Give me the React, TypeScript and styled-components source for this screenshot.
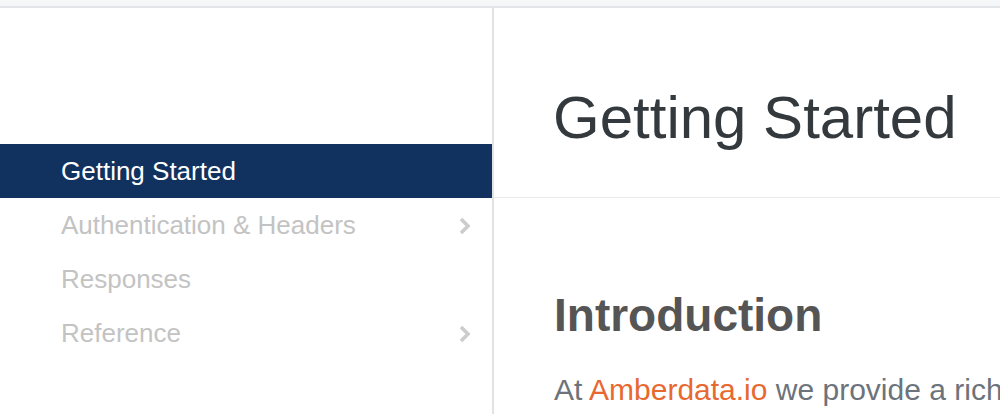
import styled, { createGlobalStyle } from "styled-components";

const GlobalStyle = createGlobalStyle`
  body {
    margin: 0;
    background: #ffffff;
    font-family: "Liberation Sans", Arial, sans-serif;
    overflow: hidden;
  }
`;

const navItems = [
  { label: "Getting Started", active: true, sub: false },
  { label: "Authentication & Headers", active: false, sub: true },
  { label: "Responses", active: false, sub: false },
  { label: "Reference", active: false, sub: true },
];

function Chevron() {
  return (
    <ChevronIcon viewBox="0 0 14 20" width="14" height="20">
      <polyline
        points="3,3 10,10 3,17"
        fill="none"
        stroke="#cccccc"
        strokeWidth="3.6"
      />
    </ChevronIcon>
  );
}

function App() {
  return (
    <Page>
      <GlobalStyle />
      <TopBar />
      <Layout>
        <Sidebar>
          {navItems.map((item) => (
            <NavItem key={item.label} $active={item.active}>
              <span>{item.label}</span>
              {item.sub && <Chevron />}
            </NavItem>
          ))}
        </Sidebar>
        <Main>
          <Header>
            <Title>Getting Started</Title>
          </Header>
          <Content>
            <SectionTitle>Introduction</SectionTitle>
            <Paragraph>
              At <Link>Amberdata.io</Link> we provide a rich set of
              blockchain data and APIs
            </Paragraph>
          </Content>
        </Main>
      </Layout>
    </Page>
  );
}

const Page = styled.div`
  width: 1000px;
  height: 414px;
  overflow: hidden;
`;

const TopBar = styled.div`
  height: 6px;
  background-color: #f5f6f8;
  border-bottom: 2px solid #e1e4e8;
`;

const Layout = styled.div`
  display: flex;
  height: 406px;
`;

const Sidebar = styled.nav`
  width: 492px;
  flex-shrink: 0;
  border-right: 2px solid #e2e2e2;
  padding-top: 136px;
  box-sizing: content-box;
`;

const NavItem = styled.div<{ $active: boolean }>`
  display: flex;
  align-items: center;
  justify-content: space-between;
  height: 54px;
  padding: 0 20px 0 61px;
  font-size: 26px;
  line-height: 54px;
  color: ${(p) => (p.$active ? "#ffffff" : "#c3c3c3")};
  background-color: ${(p) => (p.$active ? "#11325f" : "transparent")};
`;

const ChevronIcon = styled.svg`
  display: block;
  margin-top: 2px;
`;

const Main = styled.main`
  flex: 1;
  min-width: 0;
  overflow: hidden;
`;

const Header = styled.header`
  height: 109px;
  padding: 80px 0 0 59px;
  border-bottom: 1px solid #ebebeb;
`;

const Title = styled.h1`
  margin: 0;
  font-size: 60px;
  font-weight: normal;
  line-height: 1;
  color: #33393d;
  white-space: nowrap;
`;

const Content = styled.section`
  padding: 94px 0 0 60px;
`;

const SectionTitle = styled.h2`
  margin: 0;
  font-size: 46px;
  font-weight: bold;
  line-height: 1;
  color: #555555;
`;

const Paragraph = styled.p`
  margin: 31px 0 0;
  font-size: 30px;
  line-height: 42px;
  color: #6c737b;
  white-space: nowrap;
`;

const Link = styled.a`
  color: #e8692f;
  text-decoration: none;
`;

export default App;
